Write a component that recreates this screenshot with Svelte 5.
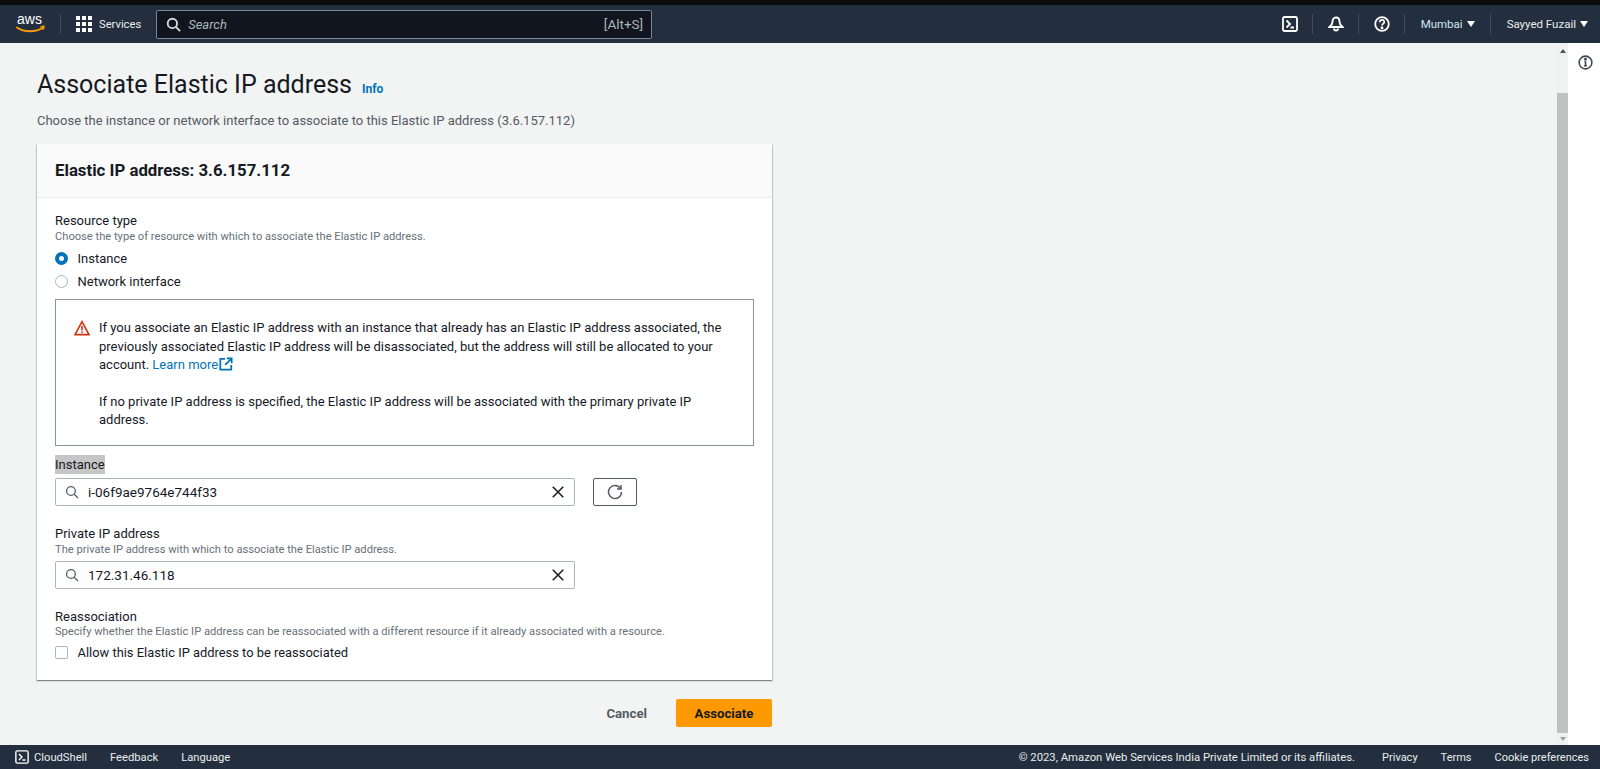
<script>
  let footerLinks = ['Privacy', 'Terms', 'Cookie preferences'];
</script>

<div class="page">
  <div class="strip"></div>
  <header class="topbar">
    <svg class="logo" viewBox="0 0 30 20" width="30" height="20">
      <text x="1" y="10" class="logo-text">aws</text>
      <path d="M1 13.500c7 5 19 5 26 0" fill="none" stroke="#f90" stroke-width="1.800" stroke-linecap="round"/>
      <path d="M24.500 12.800l3.500-.4-.8 3.400" fill="none" stroke="#f90" stroke-width="1.400"/>
    </svg>
    <span class="divider first"></span>
    <svg class="grid-icon" viewBox="0 0 16 16" width="16" height="16" fill="#fff">
      <rect x="0" y="0" width="4" height="4"/><rect x="6" y="0" width="4" height="4"/><rect x="12" y="0" width="4" height="4"/>
      <rect x="0" y="6" width="4" height="4"/><rect x="6" y="6" width="4" height="4"/><rect x="12" y="6" width="4" height="4"/>
      <rect x="0" y="12" width="4" height="4"/><rect x="6" y="12" width="4" height="4"/><rect x="12" y="12" width="4" height="4"/>
    </svg>
    <span class="services">Services</span>
    <div class="searchbox">
      <svg viewBox="0 0 16 16" width="15" height="15" fill="none" stroke="#d5dbdb" stroke-width="2"><circle cx="6.800" cy="6.800" r="5"/><path d="M10.500 10.500L15 15"/></svg>
      <span class="search-text">Search</span>
      <span class="shortcut">[Alt+S]</span>
    </div>
    <div class="top-right">
      <svg class="top-icon" viewBox="0 0 16 16" width="16" height="16" fill="none" stroke="#fff" stroke-width="1.800"><rect x="1" y="1" width="14" height="14" rx="1.500"/><path d="M4.500 4.500L8 8l-3.500 3.500M8.500 11.500h3.500"/></svg>
      <span class="divider"></span>
      <svg class="top-icon" viewBox="0 0 16 16" width="16" height="16" fill="none" stroke="#fff" stroke-width="1.900"><path d="M8 1.500c-2.500 0-3.500 2-3.500 4.200 0 2.600-1.200 3.800-3 5.300h13c-1.800-1.500-3-2.700-3-5.300C11.500 3.500 10.500 1.500 8 1.500z"/><path d="M6 12.500a2 2 0 0 0 4 0"/></svg>
      <span class="divider"></span>
      <svg class="top-icon" viewBox="0 0 16 16" width="16" height="16" fill="none" stroke="#fff" stroke-width="1.800"><circle cx="8" cy="8" r="6.800"/><path d="M5.800 6.200c0-3 4.500-3 4.500-.2 0 1.800-2.300 1.700-2.300 3.500"/><circle cx="8" cy="11.800" r=".6" fill="#fff"/></svg>
      <span class="divider after-help"></span>
      <span class="menu region">Mumbai <i class="caret"></i></span>
      <span class="divider last"></span>
      <span class="menu user">Sayyed Fuzail <i class="caret"></i></span>
    </div>
  </header>

  <div class="middle">
    <main class="content">
      <div class="title-row">
        <h1>Associate Elastic IP address</h1>
        <a class="info">Info</a>
      </div>
      <p class="desc">Choose the instance or network interface to associate to this Elastic IP address (3.6.157.112)</p>

      <section class="card">
        <div class="card-head"><h2>Elastic IP address: 3.6.157.112</h2></div>
        <div class="card-body">
          <div class="label">Resource type</div>
          <div class="hint">Choose the type of resource with which to associate the Elastic IP address.</div>
          <div class="radio-row first-radio"><span class="radio on"></span>Instance</div>
          <div class="radio-row"><span class="radio"></span>Network interface</div>

          <div class="alert">
            <svg class="warn" viewBox="0 0 16 16" width="16" height="16" fill="none" stroke="#d13212" stroke-width="1.600"><path d="M8 1.600L1 14.600h14z"/><path d="M8 6v4.500M8 11.500v1.500"/></svg>
            <div class="alert-text">
              <p>If you associate an Elastic IP address with an instance that already has an Elastic IP address associated, the previously associated Elastic IP address will be disassociated, but the address will still be allocated to your account. <a class="learn">Learn more<svg viewBox="0 0 16 16" width="14" height="14" fill="none" stroke="#0073bb" stroke-width="2"><path d="M7 2H1.500v12.500H14V9M9 1.500h5.500V7M14.500 1.500L7 9"/></svg></a></p>
              <p class="second">If no private IP address is specified, the Elastic IP address will be associated with the primary private IP address.</p>
            </div>
          </div>

          <div class="label instance-label"><span class="selected">Instance</span></div>
          <div class="field-row">
            <div class="input">
              <svg viewBox="0 0 16 16" width="14" height="14" fill="none" stroke="#545b64" stroke-width="1.500"><circle cx="6.800" cy="6.800" r="5"/><path d="M10.500 10.500L15 15"/></svg>
              <span class="value">i-06f9ae9764e744f33</span>
              <svg class="clear" viewBox="0 0 16 16" width="14" height="14" fill="none" stroke="#16191f" stroke-width="1.700"><path d="M2 2l12 12M14 2L2 14"/></svg>
            </div>
            <button class="refresh" aria-label="Refresh">
              <svg viewBox="0 0 16 16" width="16" height="16" fill="none" stroke="#545b64" stroke-width="1.500"><path d="M13.500 4.500A6.500 6.500 0 1 0 14.500 8"/><path d="M14 1v4h-4"/></svg>
            </button>
          </div>

          <div class="label private-label">Private IP address</div>
          <div class="hint">The private IP address with which to associate the Elastic IP address.</div>
          <div class="input private-input">
            <svg viewBox="0 0 16 16" width="14" height="14" fill="none" stroke="#545b64" stroke-width="1.500"><circle cx="6.800" cy="6.800" r="5"/><path d="M10.500 10.500L15 15"/></svg>
            <span class="value">172.31.46.118</span>
            <svg class="clear" viewBox="0 0 16 16" width="14" height="14" fill="none" stroke="#16191f" stroke-width="1.700"><path d="M2 2l12 12M14 2L2 14"/></svg>
          </div>

          <div class="label reassoc-label">Reassociation</div>
          <div class="hint">Specify whether the Elastic IP address can be reassociated with a different resource if it already associated with a resource.</div>
          <div class="check-row"><span class="check"></span>Allow this Elastic IP address to be reassociated</div>
        </div>
      </section>

      <div class="actions">
        <button class="cancel">Cancel</button>
        <button class="primary">Associate</button>
      </div>
    </main>

    <div class="scrollbar">
      <span class="arrow up"></span>
      <div class="thumb"></div>
      <span class="arrow down"></span>
    </div>
    <aside class="side">
      <svg viewBox="0 0 16 16" width="15" height="15" fill="none" stroke="#414750" stroke-width="1.700"><circle cx="8" cy="8" r="6.800"/><path d="M8 7v4.500M6.500 11.500h3M6.800 7H8"/><circle cx="8" cy="4.600" r=".7" fill="#414750"/></svg>
    </aside>
  </div>

  <footer class="footer">
    <svg viewBox="0 0 16 16" width="14" height="14" fill="none" stroke="#fff" stroke-width="1.600"><rect x="1" y="1" width="14" height="14" rx="1.500"/><path d="M4.500 4.500L8 8l-3.500 3.500M8.500 11.500h3.500"/></svg>
    <span class="cloudshell">CloudShell</span>
    <span class="foot-link">Feedback</span>
    <span class="foot-link">Language</span>
    <span class="copyright">© 2023, Amazon Web Services India Private Limited or its affiliates.</span>
    {#each footerLinks as link}
      <span class="foot-right">{link}</span>
    {/each}
  </footer>
</div>

<style>
  :global(body) { margin: 0; overflow: hidden; font-family: Roboto, "Noto Sans", sans-serif; color: #16191f; }
  .page { height: 769px; display: flex; flex-direction: column; background: #f2f3f3; font-size: 13px; }
  .strip { height: 5px; background: #0b0b0b; }

  .topbar { height: 38px; background: #232f3e; display: flex; align-items: center; padding: 0 12px 0 16px; color: #fff; box-sizing: border-box; }
  .logo { flex: none; overflow: visible; }
  .logo-text { font: 14px "Liberation Sans", sans-serif; fill: #fff; }
  .divider { width: 1px; height: 20px; background: #414d5c; flex: none; }
  .divider.first { margin: 0 15px 0 14px; }
  .grid-icon { flex: none; margin-right: 7px; }
  .services { font-size: 11.2px; margin-right: 15px; color: #eaeded; }
  .searchbox { width: 477px; height: 27px; background: #11151f; border: 1px solid #7d8998; border-radius: 2px; display: flex; align-items: center; padding: 0 8px 0 9px; color: #aab7b8; }
  .search-text { font-style: italic; margin-left: 7px; font-size: 13px; }
  .shortcut { margin-left: auto; font-size: 13.500px; }
  .top-right { margin-left: auto; display: flex; align-items: center; }
  .top-right .divider { margin: 0 14.500px; }
  .top-right .divider.after-help { margin: 0 15.500px 0 14.500px; }
  .top-right .divider.last { margin: 0 15.500px; }
  .menu { font-size: 11.5px; display: flex; align-items: center; gap: 4px; white-space: nowrap; }
  .region { color: #d1e6f7; }
  .user { color: #eaeded; }
  .caret { border: 4.500px solid transparent; border-top: 6px solid #fff; border-bottom: 0; display: inline-block; }

  .middle { flex: 1; display: flex; min-height: 0; }
  .content { flex: 1; padding: 25px 0 0 37px; min-width: 0; }
  .title-row { display: flex; align-items: baseline; gap: 10px; height: 33px; }
  h1 { margin: 0; font-size: 25px; font-weight: 400; line-height: 33px; }
  .info { color: #0073bb; font-size: 12px; font-weight: 700; }
  .desc { margin: 10px 0 0; color: #545b64; font-size: 13px; line-height: 20px; }

  .card { width: 735px; margin-top: 13px; background: #fff; box-shadow: 0 1px 1px 0 rgba(0,28,36,.3), 1px 1px 1px 0 rgba(0,28,36,.15), -1px 1px 1px 0 rgba(0,28,36,.15); }
  .card-head { height: 54px; background: #fafafa; border-bottom: 1px solid #eaeded; display: flex; align-items: center; padding: 0 0 2px 18px; box-sizing: border-box; }
  h2 { margin: 0; font-size: 16.800px; font-weight: 700; }
  .card-body { padding: 14px 18px 18px; height: 482px; box-sizing: border-box; }
  .label { font-size: 13px; line-height: 18px; }
  .hint { font-size: 11.150px; line-height: 14px; color: #687078; }
  .radio-row { display: flex; align-items: center; height: 23px; gap: 9.500px; }
  .first-radio { margin-top: 3px; }
  .radio { width: 13px; height: 13px; border-radius: 50%; border: 1px solid #aab7b8; background: #fff; box-sizing: border-box; flex: none; }
  .radio.on { border: 4px solid #0073bb; }
  .alert { height: 147px; margin-top: 6px; border: 1px solid #879596; box-sizing: border-box; display: flex; gap: 9px; padding: 19px 18px 0; }
  .warn { flex: none; margin-top: 1px; }
  .alert-text { font-size: 13px; line-height: 18.500px; color: #16191f; }
  .alert-text p { margin: 0; }
  .alert-text .second { margin-top: 18px; }
  .learn { color: #0073bb; }
  .learn svg { vertical-align: -2px; margin-left: 1px; }
  .instance-label { margin-top: 9px; line-height: 19px; height: 19px; }
  .selected { background: #c6c6c6; display: inline-block; }
  .field-row { display: flex; margin-top: 4px; gap: 18px; }
  .input { width: 520px; height: 28px; box-sizing: border-box; border: 1px solid #aab7b8; border-radius: 2px; background: #fff; display: flex; align-items: center; padding: 0 9px; }
  .value { margin-left: 9px; font-size: 13.500px; }
  .clear { margin-left: auto; }
  .refresh { width: 44px; height: 28px; background: #fff; border: 1px solid #545b64; border-radius: 2px; display: flex; align-items: center; justify-content: center; padding: 0; }
  .private-label { margin-top: 19px; }
  .private-input { margin-top: 4px; }
  .reassoc-label { margin-top: 18px; line-height: 20px; height: 18px; }
  .check-row { display: flex; align-items: center; gap: 9.500px; margin-top: 4px; height: 18px; font-size: 12.900px; }
  .check { width: 13px; height: 13px; box-sizing: border-box; border: 1px solid #aab7b8; border-radius: 2px; background: #fff; flex: none; }

  .actions { width: 735px; display: flex; justify-content: flex-end; align-items: center; gap: 21px; margin-top: 19px; }
  .cancel { background: none; border: 0; padding: 0 8px; color: #545b64; font: 700 13.200px Roboto, sans-serif; }
  .primary { width: 96px; height: 28px; border: 0; border-radius: 2px; background: #ff9900; color: #16191f; font: 700 13.200px Roboto, sans-serif; }

  .scrollbar { width: 11px; background: #f1f1f1; display: flex; flex-direction: column; align-items: center; position: relative; }
  .thumb { position: absolute; top: 50px; bottom: 12px; left: 0; right: 0; background: #c1c1c1; }
  .arrow { border: 3px solid transparent; flex: none; }
  .arrow.up { border-top: 0; border-bottom: 4px solid #505050; margin-top: 6px; }
  .arrow.down { border-bottom: 0; border-top: 4px solid #a0a0a0; margin-top: auto; margin-bottom: 4px; }
  .side { width: 32px; background: #fff; display: flex; justify-content: center; padding: 12px 0 0 3px; box-sizing: border-box; }

  .footer { height: 24px; background: #232f3e; color: #eaeded; display: flex; align-items: center; padding: 0 11px 0 15px; font-size: 11.200px; white-space: nowrap; }
  .cloudshell { margin-left: 5px; }
  .foot-link { margin-left: 23px; }
  .copyright { margin-left: auto; font-size: 11.300px; }
  .foot-right { margin-left: 23px; font-size: 11px; }
  .copyright + .foot-right { margin-left: 27px; }
</style>
